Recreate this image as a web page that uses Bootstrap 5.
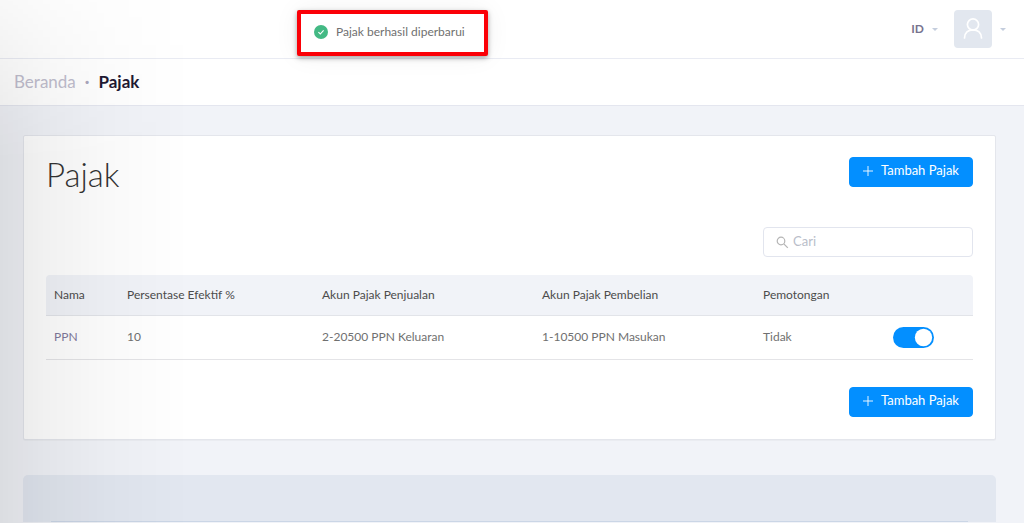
<!DOCTYPE html>
<html lang="id">
<head>
<meta charset="utf-8">
<meta name="viewport" content="width=device-width, initial-scale=1">
<title>Pajak</title>
<link href="https://cdn.jsdelivr.net/npm/bootstrap@5.3.0/dist/css/bootstrap.min.css" rel="stylesheet">
<style>
body{font-family:Lato,"Open Sans",sans-serif;font-size:12px;line-height:20px;color:#707070;background:#f1f3f8;overflow-x:hidden}
.side-shade{position:fixed;inset:0 auto 0 0;width:190px;pointer-events:none;z-index:5;
background:linear-gradient(90deg,rgba(0,0,0,.09),rgba(0,0,0,.055) 24%,rgba(0,0,0,.022) 57%,transparent);
-webkit-mask-image:linear-gradient(rgba(0,0,0,.3),#000 160px);mask-image:linear-gradient(rgba(0,0,0,.3),#000 160px)}
.topbar{height:59px;border-bottom:1px solid #e9ebf3;padding-right:18px}
.crumbs{height:47px;border-bottom:1px solid #e4e6ef;padding-left:14px;font-size:17px;--bs-breadcrumb-divider:"·"}
.crumbs a{color:#c0bdcd}
.crumbs .active{color:#1f1a33;font-weight:700}
.crumbs .breadcrumb-item+.breadcrumb-item{padding-left:9px}
.crumbs .breadcrumb-item+.breadcrumb-item::before{padding-right:9px;color:#aaa7bd}
.notice{top:10px;left:297px;height:46px;width:191px;padding:0 0 2px 13px;border:4px solid #fb0007;border-radius:2px;background:#fff;box-shadow:0 2px 5px rgba(0,0,0,.35),0 0 26px rgba(0,0,0,.06)}
.lang{color:#77738f;font-weight:700;font-size:12px}
.avatar{width:38px;height:38px;border-radius:4px;background:#e2e7ef}
.page{padding:29px 28px 0 23px}
.panel{border:1px solid #e4e6ec;border-radius:2px;padding:21px 22px 22px;box-shadow:0 1px 1px rgba(0,0,0,.03)}
h1{font-size:33px;font-weight:300;line-height:34px;color:#333}
.btn-add{--bs-btn-bg:#038fff;--bs-btn-border-color:#038fff;--bs-btn-color:#fff;--bs-btn-hover-bg:#0380e6;--bs-btn-hover-color:#fff;width:124px;height:30px;padding:0 0 2px;font-size:13px;border-radius:4px}
.search{width:210px;height:30px;margin-top:36px;padding-left:12px;border:1px solid #e2e5ee;border-radius:4px}
.search input{font-size:13px;box-shadow:none!important}
.search input::placeholder{color:#b9bdc9}
.taxes{table-layout:fixed;margin:18px 0 27px;--bs-table-color:#707070;--bs-table-bg:transparent}
.taxes th,.taxes td{padding:0 8px}
.taxes th{height:40px;font-weight:400;color:#4c4c4c;background:#f1f3f8;border-bottom:1px solid #e2e4e9;vertical-align:middle}
.taxes th:first-child{border-top-left-radius:4px}
.taxes th:last-child{border-top-right-radius:4px}
.taxes td{height:44px;border-bottom:1px solid #e4e4e7}
.taxes a{color:#817a9c}
.c-name{width:73px}.c-rate{width:195px}.c-sale{width:220px}.c-buy{width:221px}.c-cut{width:130px}
.form-switch{min-height:20px}
.form-switch .form-check-input{width:41px;height:21px;margin:0;border:0;background-color:#038fff;
background-image:url("data:image/svg+xml,%3csvg xmlns='http://www.w3.org/2000/svg' viewBox='-4 -4 8 8'%3e%3ccircle r='3.3' fill='%23fff'/%3e%3c/svg%3e")}
.foot{margin-top:35px;padding:46px 28px 0;background:#e2e7f0;border-radius:5px 5px 0 0}
.foot hr{margin:0;border-color:#cbd6e6;opacity:1}
</style>
</head>
<body>
<div class="side-shade"></div>
<header class="topbar bg-white d-flex align-items-center justify-content-end position-relative">
  <div class="notice position-absolute d-flex align-items-center" role="status">
    <svg class="me-2 flex-shrink-0" width="14" height="14" viewBox="0 0 14 14" aria-hidden="true"><circle cx="7" cy="7" r="7" fill="#43b984"/><path d="M4.4 7.1 6.3 9 9.6 5.4" fill="none" stroke="#fff" stroke-width="1.1"/></svg>
    <span class="text-nowrap">Pajak berhasil diperbarui</span>
  </div>
  <button type="button" class="lang btn p-0 border-0 d-flex align-items-center gap-2 me-3">ID
    <svg width="6" height="3" viewBox="0 0 6 3" aria-hidden="true"><path d="M0 0h6L3 3z" fill="#c4cddd"/></svg>
  </button>
  <button type="button" class="btn p-0 border-0 d-flex align-items-center gap-2" aria-label="Akun">
    <span class="avatar"><svg width="38" height="38" viewBox="0 0 38 38" fill="none" stroke="#fff" stroke-width="1.7" stroke-linecap="round" class="d-block"><circle cx="19" cy="14.500" r="5.600"/><path d="M10.500 28c0-5.200 3.700-8.200 8.500-8.200s8.500 3 8.500 8.200"/></svg></span>
    <svg width="6" height="3" viewBox="0 0 6 3" aria-hidden="true"><path d="M0 0h6L3 3z" fill="#c4cddd"/></svg>
  </button>
</header>
<nav class="crumbs bg-white d-flex align-items-center" aria-label="breadcrumb">
  <ol class="breadcrumb m-0">
    <li class="breadcrumb-item"><a class="text-decoration-none" href="#">Beranda</a></li>
    <li class="breadcrumb-item active" aria-current="page">Pajak</li>
  </ol>
</nav>
<main class="page">
  <section class="panel bg-white">
    <div class="d-flex justify-content-between align-items-start">
      <h1 class="m-0">Pajak</h1>
      <button type="button" class="btn btn-add d-flex align-items-center justify-content-center gap-2"><svg width="10" height="10" viewBox="0 0 10 10" aria-hidden="true"><path d="M5 0v10M0 5h10" stroke="#fff" stroke-width=".9"/></svg>Tambah Pajak</button>
    </div>
    <div class="search d-flex align-items-center ms-auto">
      <svg class="flex-shrink-0 me-1" width="13" height="13" viewBox="0 0 13 13" fill="none" stroke="#b5b5b5" stroke-width="1.2" aria-hidden="true"><circle cx="5" cy="5" r="3.800"/><path d="m7.800 7.800 4 4"/></svg>
      <input type="search" class="form-control border-0 p-0 bg-transparent" placeholder="Cari" aria-label="Cari">
    </div>
    <table class="table taxes align-middle">
      <colgroup><col class="c-name"><col class="c-rate"><col class="c-sale"><col class="c-buy"><col class="c-cut"><col></colgroup>
      <thead><tr><th>Nama</th><th>Persentase Efektif %</th><th>Akun Pajak Penjualan</th><th>Akun Pajak Pembelian</th><th>Pemotongan</th><th aria-label="Aktif"></th></tr></thead>
      <tbody><tr>
        <td><a class="text-decoration-none" href="#">PPN</a></td><td>10</td><td>2-20500 PPN Keluaran</td><td>1-10500 PPN Masukan</td><td>Tidak</td>
        <td><div class="form-check form-switch p-0 m-0 d-flex"><input class="form-check-input" type="checkbox" role="switch" checked aria-label="Aktifkan PPN"></div></td>
      </tr></tbody>
    </table>
    <button type="button" class="btn btn-add d-flex align-items-center justify-content-center gap-2 ms-auto"><svg width="10" height="10" viewBox="0 0 10 10" aria-hidden="true"><path d="M5 0v10M0 5h10" stroke="#fff" stroke-width=".9"/></svg>Tambah Pajak</button>
  </section>
  <footer class="foot"><hr></footer>
</main>
<script src="https://cdn.jsdelivr.net/npm/bootstrap@5.3.0/dist/js/bootstrap.bundle.min.js"></script>
</body>
</html>
